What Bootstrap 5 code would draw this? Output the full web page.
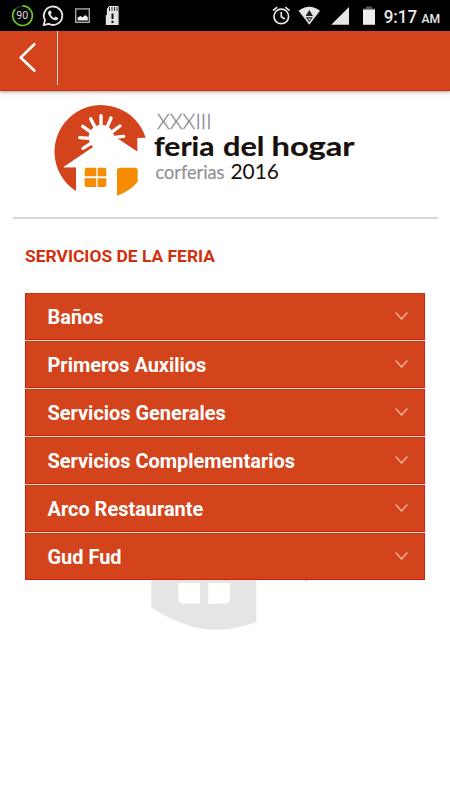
<!DOCTYPE html>
<html lang="es">
<head>
<meta charset="utf-8">
<meta name="viewport" content="width=device-width, initial-scale=1">
<title>Servicios de la feria</title>
<link href="https://cdn.jsdelivr.net/npm/bootstrap@5.3.0/dist/css/bootstrap.min.css" rel="stylesheet">
<style>
body{font-family:Roboto,sans-serif;background:#fff}
svg{display:block}
.screen{width:450px;height:800px}
.status{height:31px;background:#000}
.appbar{height:60px;background:#d3441c;border-bottom:1px solid #d42c08;box-shadow:0 1px 3px rgba(0,0,0,.35)}
.back{width:58px;height:54px;box-shadow:inset -1px 0 #f6d5cb}
.brand{height:126px;background:linear-gradient(#f9f9f9,#fff 14px)}
.rule{height:2px;margin:0 12px 0 13px;background:#d6d6d6}
.title{line-height:20px;margin:28px 25px 0}
.title text{font-size:17.4px;font-weight:700;fill:#d2300c}
.services{margin:26px 25px 0;gap:1px;background:#e9e0dd}
.service{height:47px;background:#d3441c;border:1px solid #d0200b;border-top-color:#d3360f;color:#fff;font-size:19.95px;font-weight:700;padding:3px 16px 0 21.5px}
.service svg{margin-top:-5px}
.watermark{margin-left:151px}
</style>
<script src="https://cdn.jsdelivr.net/npm/bootstrap@5.3.0/dist/js/bootstrap.bundle.min.js"></script>
</head>
<body>
<div class="screen overflow-hidden">
  <div class="status">
    <svg width="450" height="31" viewBox="0 0 450 31" font-family="Roboto, sans-serif">
      <circle cx="22.5" cy="15.7" r="9.8" fill="none" stroke="#2a3428" stroke-width="1.5"/>
      <path d="M22.5 5.9a9.8 9.8 0 1 1-7.3 3.3" fill="none" stroke="#66cf1d" stroke-width="1.6"/>
      <text x="16.2" y="19.4" font-size="10.5" textLength="12" lengthAdjust="spacingAndGlyphs" fill="#ddd">90</text>
      <path d="M43.6 25.2 45 20.2A9.2 9.2 0 1 1 48.6 23.8z" fill="none" stroke="#e8e8e8" stroke-width="1.8" stroke-linejoin="round"/>
      <path d="M49.3 10.7c-1.3.7-1.6 2-.9 3.8 1.3 3 3.7 5 6.7 5.8 1.5.3 3-.5 3-2.2l-2.6-1.6-1.4 1.4c-1.7-.7-2.8-1.9-3.5-3.4l1.1-1.3-1-2.6z" fill="#e8e8e8"/>
      <rect x="75.7" y="8.9" width="13.6" height="13.4" fill="none" stroke="#aaa" stroke-width="1.4"/>
      <path d="M77.6 20.6v-3l2.8-1.6 2.2 1.2 2.6-2.3 2.6 2.4v3.3z" fill="#eee"/>
      <path d="M109 6h9.6v19H105.8v-9.500l1.100-1V9z" fill="#e3e3e3"/>
      <path d="M109.5 7v4M112 7v4M114.5 7v4M117 7v4" stroke="#333" stroke-width="1"/>
      <path d="M112.5 13.5v5.5M112.5 20.7v2.2" stroke="#111" stroke-width="2"/>
      <g fill="none" stroke="#e6e6e6" stroke-width="1.7">
        <circle cx="281.3" cy="16.4" r="7.3"/><path d="M281.3 12v4.7l3.5 2.3M273 10.6l4.2-3.500M289.5 10.6l-4.2-3.500"/>
      </g>
      <path d="M298.6 10.8q10.7-8.3 21.4 0L309.3 24.8z" fill="#e6e6e6"/>
      <path d="M309.3 10l3.7 6h-7.4zM305.8 17.3h7l-3.5 5z" fill="#222"/><path d="M307.7 18.4h3.4l-1.7 2z" fill="#e6e6e6"/>
      <path d="M331.2 24.8 349 7v17.8z" fill="#e6e6e6"/>
      <path d="M366 6.4h6v2h3v2.4h-12V8.400h3z" fill="#555"/><rect x="363" y="9.6" width="12" height="15.2" fill="#eee"/>
      <text x="383.7" y="22.6" font-size="18.2" font-weight="500" textLength="33.5" lengthAdjust="spacingAndGlyphs" fill="#e8e8e8">9:17</text>
      <text x="421.5" y="22.6" font-size="13" font-weight="500" textLength="18.7" lengthAdjust="spacingAndGlyphs" fill="#e8e8e8">AM</text>
    </svg>
  </div>
  <nav class="appbar position-relative">
    <a href="#" class="back d-block" aria-label="Volver">
      <svg width="57" height="54" viewBox="0 0 57 54"><path d="M34.3 13.2 20.600 26.600l13.700 13" fill="none" stroke="#fff" stroke-width="2.7" stroke-linecap="round" stroke-linejoin="round"/></svg>
    </a>
  </nav>
  <header class="brand">
    <svg width="450" height="126" viewBox="0 91 450 126">
      <g transform="translate(45 95) scale(.33333)">
        <path d="M93 288V217H55L145 156 205 122 277 170V129L302 128A140 140 0 1 0 93 288z" fill="#d3441c"/>
        <circle cx="169" cy="127" r="38" fill="#fff"/>
        <path d="M55 217 150 153 205 122 277 170V217z" fill="#fff"/>
        <path d="M168 62v35M198 69 186 98M225 93 203 109M236 124 208 127M137 71 150 97M113 94 136 110M104 128 136 130M114 160 146 140" stroke="#fff" stroke-width="10" stroke-linecap="round"/>
        <path d="M125 218h29v26h-35v-20q0-6 6-6zM158 218h20q6 0 6 6v20h-26zM119 250h35v26h-29q-6 0-6-6zM158 250h26v20q0 6-6 6h-20zM224 218h47q7 0 7 7v36q-25 29-62 41v-76q0-8 8-8z" fill="#f68b04"/>
      </g>
      <text x="157" y="129.300" font-family="Lato, sans-serif" font-weight="300" font-size="22" textLength="54.500" lengthAdjust="spacingAndGlyphs" fill="#85858b" stroke="#85858b" stroke-width=".3">XXXIII</text>
      <g font-family="Lato, sans-serif" font-weight="700" font-size="27.500" fill="#17100d" stroke="#17100d" stroke-width=".2">
        <text x="154" y="155.600" textLength="60.500" lengthAdjust="spacingAndGlyphs">feria</text>
        <text x="223" y="155.600" textLength="41.500" lengthAdjust="spacingAndGlyphs">del</text>
        <text x="271.500" y="155.600" textLength="83" lengthAdjust="spacingAndGlyphs">hogar</text>
      </g>
      <text x="155.500" y="178.500" font-family="Lato, sans-serif" font-size="19" textLength="69" lengthAdjust="spacingAndGlyphs" fill="#919196" stroke="#919196" stroke-width=".2">corferias</text>
      <text x="230.500" y="178.500" font-family="Lato, sans-serif" font-size="21" textLength="48.500" lengthAdjust="spacingAndGlyphs" fill="#17100d">2016</text>
    </svg>
  </header>
  <div class="rule"></div>
  <h1 class="title"><svg width="190" height="20"><text x="0" y="15.400" textLength="190" lengthAdjust="spacingAndGlyphs">SERVICIOS DE LA FERIA</text></svg></h1>
  <div class="services d-flex flex-column">
    <div class="service d-flex align-items-center justify-content-between"><span>Baños</span><svg width="13" height="8" viewBox="0 0 13 8"><path d="M.7.500 6.500 7 12.300.500" fill="none" stroke="#f1b9a6" stroke-width="1.300"/></svg></div>
    <div class="service d-flex align-items-center justify-content-between"><span>Primeros Auxilios</span><svg width="13" height="8" viewBox="0 0 13 8"><path d="M.7.500 6.500 7 12.300.500" fill="none" stroke="#f1b9a6" stroke-width="1.300"/></svg></div>
    <div class="service d-flex align-items-center justify-content-between"><span>Servicios Generales</span><svg width="13" height="8" viewBox="0 0 13 8"><path d="M.7.500 6.500 7 12.300.500" fill="none" stroke="#f1b9a6" stroke-width="1.300"/></svg></div>
    <div class="service d-flex align-items-center justify-content-between"><span>Servicios Complementarios</span><svg width="13" height="8" viewBox="0 0 13 8"><path d="M.7.500 6.500 7 12.300.500" fill="none" stroke="#f1b9a6" stroke-width="1.300"/></svg></div>
    <div class="service d-flex align-items-center justify-content-between"><span>Arco Restaurante</span><svg width="13" height="8" viewBox="0 0 13 8"><path d="M.7.500 6.500 7 12.300.500" fill="none" stroke="#f1b9a6" stroke-width="1.300"/></svg></div>
    <div class="service d-flex align-items-center justify-content-between"><span>Gud Fud</span><svg width="13" height="8" viewBox="0 0 13 8"><path d="M.7.500 6.500 7 12.300.500" fill="none" stroke="#f1b9a6" stroke-width="1.300"/></svg></div>
  </div>
  <svg class="watermark" width="160" height="52" viewBox="151 580 160 52">
    <path d="M151.300 580H256.300V622Q203 643 151.300 607z" fill="#e5e5e5"/>
    <path d="M178.300 583H200v20.700h-16.500q-5.200 0-5.200-5.200zM208.300 583H230v15.500q0 5.200-5.200 5.200h-16.500z" fill="#fff"/>
    <path d="M305 580h3l-2.500 2.500z" fill="#ddd"/>
  </svg>
</div>
</body>
</html>
